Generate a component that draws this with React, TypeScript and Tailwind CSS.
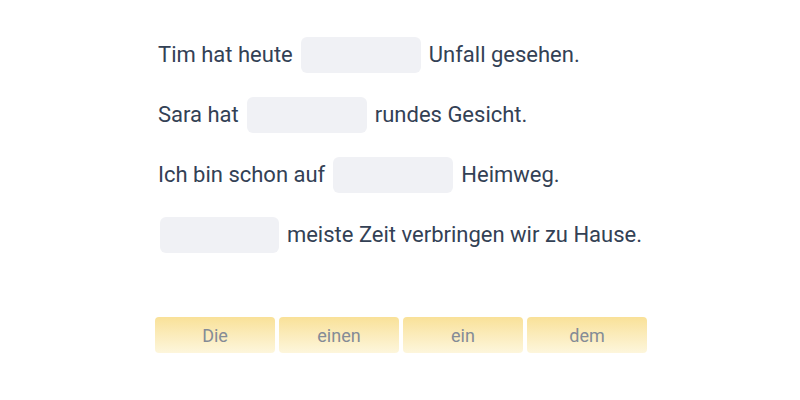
import React from "react";

const Blank = () => (
  <span className="inline-block w-[120px] h-9 mx-[2px] rounded-md bg-[#f0f1f5]" />
);

const rows: (string | null)[][] = [
  ["Tim hat heute", null, "Unfall gesehen."],
  ["Sara hat", null, "rundes Gesicht."],
  ["Ich bin schon auf", null, "Heimweg."],
  [null, "meiste Zeit verbringen wir zu Hause."],
];

const words = ["Die", "einen", "ein", "dem"];

export default function App() {
  return (
    <div
      className="w-[800px] h-[400px] bg-white"
      style={{ fontFamily: "Roboto, 'Liberation Sans', sans-serif" }}
    >
      <div className="w-[484px] mx-auto pt-[37px] flex flex-col gap-6">
        {rows.map((r, i) => (
          <div key={i} className="flex items-center gap-[6px] h-9 text-[22px] leading-none text-[#334155] whitespace-nowrap">
            {r.map((p, j) => (p === null ? <Blank key={j} /> : <span key={j}>{p}</span>))}
          </div>
        ))}
      </div>
      <div className="flex justify-center gap-1 mt-16 pl-[2px]">
        {words.map((w) => (
          <div
            key={w}
            className="w-[120px] h-9 rounded flex items-center justify-center text-[18px] text-[#848b96] bg-gradient-to-b from-[#f9e198] to-[#fdf6dc]"
          >
            {w}
          </div>
        ))}
      </div>
    </div>
  );
}
